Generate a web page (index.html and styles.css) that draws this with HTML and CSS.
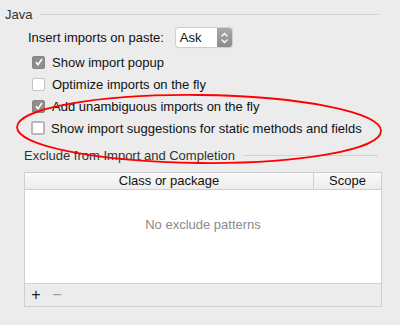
FILE: index.html
```html
<!DOCTYPE html>
<html lang="en">
<head>
  <meta charset="UTF-8">
  <title>Auto Import</title>
  <link rel="stylesheet" href="styles.css">
</head>
<body>
  <div class="panel">
    <div class="groupTitle java">
      <span>Java</span>
      <div class="rule"></div>
    </div>

    <div class="pasteRow">
      <span>Insert imports on paste:</span>
      <div class="popup">
        <span class="popupValue">Ask</span>
        <span class="popupArrows">
          <svg width="9" height="12" viewBox="0 0 9 12">
            <path d="M1.5 4.5 L4.5 1.5 L7.5 4.5 M1.5 7.5 L4.5 10.5 L7.5 7.5" fill="none" stroke="#fff" stroke-width="1.3"/>
          </svg>
        </span>
      </div>
    </div>

    <ul class="checks">
      <li><span class="box checked"><svg width="12" height="12" viewBox="0 0 12 12"><path d="M3 6.2 L5 8.6 L9 3" fill="none" stroke="#fff" stroke-width="1.6"/></svg></span>Show import popup</li>
      <li><span class="box"></span>Optimize imports on the fly</li>
      <li><span class="box checked"><svg width="12" height="12" viewBox="0 0 12 12"><path d="M3 6.2 L5 8.6 L9 3" fill="none" stroke="#fff" stroke-width="1.6"/></svg></span>Add unambiguous imports on the fly</li>
      <li><span class="box focus"></span>Show import suggestions for static methods and fields</li>
    </ul>

    <div class="groupTitle exclude">
      <span>Exclude from Import and Completion</span>
      <div class="rule"></div>
    </div>

    <div class="table">
      <div class="tableHead">
        <div class="colMain">Class or package</div>
        <div class="colScope">Scope</div>
      </div>
      <div class="tableBody">No exclude patterns</div>
      <div class="tableFoot">
        <span class="tool">+</span>
        <span class="tool off">&minus;</span>
      </div>
    </div>

    <svg class="mark" width="400" height="325" viewBox="0 0 400 325">
      <ellipse cx="199" cy="129" rx="182" ry="34" transform="rotate(0.6 199 129)" fill="none" stroke="#f00" stroke-width="1.8"/>
    </svg>
  </div>
</body>
</html>
```

FILE: styles.css
```css
body{
  margin: 0;
  background: #ececec;
  font-family: "Liberation Sans", "DejaVu Sans", sans-serif;
  font-size: 13px;
  color: #111;
}
.panel{
  position: relative;
  width: 400px;
  height: 325px;
  overflow: hidden;
}
.groupTitle{
  display: flex;
  align-items: center;
  gap: 8px;
  color: #333;
}
.groupTitle .rule{
  flex: 1;
  height: 1px;
  background: #d3d3d3;
}
.java{
  padding: 6px 21px 0 5px;
  height: 16px;
}
.exclude{
  margin-top: 8px;
  padding: 0 22px 0 24px;
  height: 16px;
}
.pasteRow{
  display: flex;
  align-items: center;
  gap: 12px;
  padding-left: 28px;
  margin-top: 6px;
  height: 19px;
}
.popup{
  display: flex;
  width: 56px;
  height: 19px;
  border-radius: 3px;
  background: #fff;
  box-shadow: 0 0 0 1px #cfcfcf, 0 1px 1px rgba(0,0,0,0.15);
  overflow: hidden;
}
.popupValue{
  flex: 1;
  padding-left: 4px;
  line-height: 19px;
}
.popupArrows{
  width: 15px;
  display: flex;
  align-items: center;
  justify-content: center;
  background: linear-gradient(#a9a9a9, #8a8a8a);
}
.checks{
  list-style: none;
  margin: 4px 0 0 0;
  padding: 0 0 0 32px;
}
.checks li{
  display: flex;
  align-items: center;
  gap: 7px;
  height: 22px;
}
.box{
  width: 11px;
  height: 11px;
  border: 1px solid #c4c4c4;
  border-radius: 2px;
  background: #fff;
  display: flex;
  align-items: center;
  justify-content: center;
}
.box svg{
  flex: none;
}
.box.checked{
  background: #8e8e8e;
  border-color: #858585;
}
.box.focus{
  border: 2px solid #b9b9b9;
  width: 10px;
  height: 10px;
  margin-left: -1px;
  margin-right: -1px;
}
.table{
  margin: 9px 18px 0 24px;
  border: 1px solid #cfcfcf;
}
.tableHead{
  display: flex;
  height: 16px;
  line-height: 16px;
  background: linear-gradient(#fafafa, #ececec);
  border-bottom: 1px solid #cfcfcf;
  text-align: center;
}
.colMain{
  flex: 1;
  border-right: 1px solid #cfcfcf;
}
.colScope{
  width: 67px;
}
.tableBody{
  height: 94px;
  background: #fff;
  text-align: center;
  color: #8a8a8a;
  border-bottom: 1px solid #d3d3d3;
  padding-top: 27px;
  box-sizing: border-box;
}
.tableFoot{
  height: 22px;
  display: flex;
  align-items: center;
  gap: 9px;
  padding-left: 5px;
  background: #ececec;
}
.tool{
  font-size: 16px;
  color: #222;
  width: 12px;
  text-align: center;
}
.tool.off{
  color: #9a9a9a;
}
.mark{
  position: absolute;
  left: 0;
  top: 0;
  pointer-events: none;
}
```
